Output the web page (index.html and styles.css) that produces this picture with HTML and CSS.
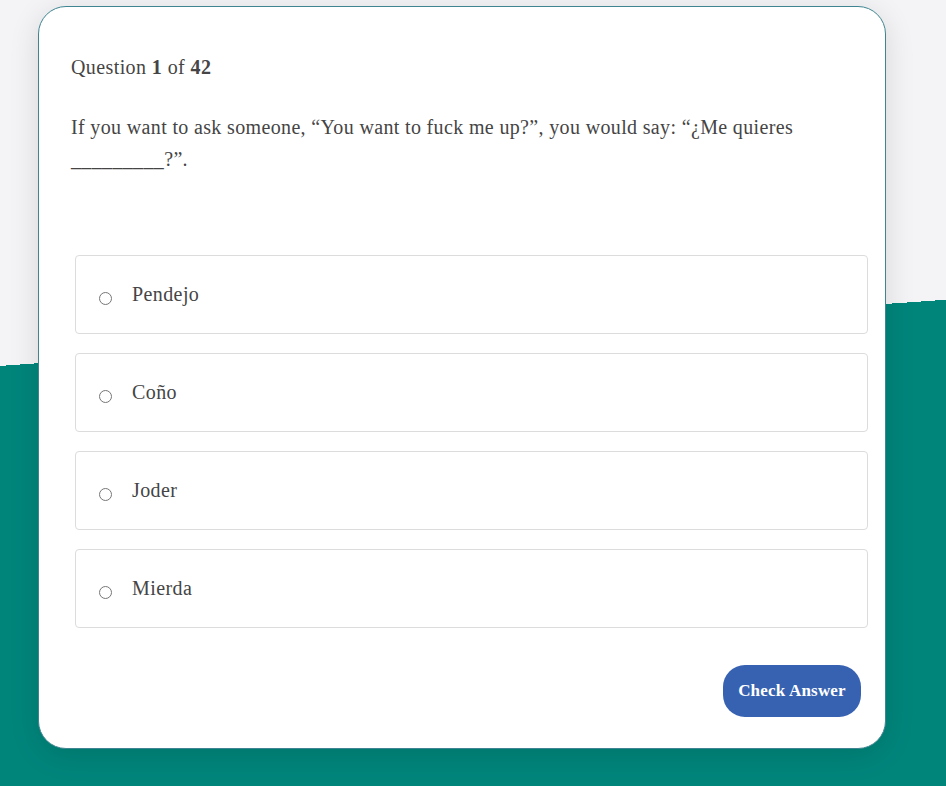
FILE: index.html
```html
<!DOCTYPE html>
<html lang="en">
<head>
    <meta charset="UTF-8">
    <meta name="viewport" content="width=device-width, initial-scale=1.0">
    <title>Spanish Swear Words Quiz</title>
    <link rel="stylesheet" href="styles.css">
</head>
<body>
    <div class="page">
        <div class="quiz-card">
            <p class="quiz-count">Question <b>1</b> of <b>42</b></p>
            <p class="quiz-question">If you want to ask someone, &ldquo;You want to fuck me up?&rdquo;, you would say: &ldquo;&iquest;Me quieres _________?&rdquo;.</p>

            <form class="quiz-options">
                <label class="option">
                    <input type="radio" name="answer" value="Pendejo">
                    <span>Pendejo</span>
                </label>
                <label class="option">
                    <input type="radio" name="answer" value="Coño">
                    <span>Coño</span>
                </label>
                <label class="option">
                    <input type="radio" name="answer" value="Joder">
                    <span>Joder</span>
                </label>
                <label class="option">
                    <input type="radio" name="answer" value="Mierda">
                    <span>Mierda</span>
                </label>
            </form>

            <div class="quiz-footer">
                <button type="button" class="check-btn">Check Answer</button>
            </div>
        </div>
    </div>
</body>
</html>
```

FILE: styles.css
```css
body {
    margin: 0;
    padding: 0;
    font-family: 'Liberation Serif', 'DejaVu Serif', serif;
    color: #454545;
}
.page {
    min-height: 100vh;
    box-sizing: border-box;
    padding: 6px 0 36px 38px;
    background: linear-gradient(176deg, #f4f4f6 365px, #00857b 365px);
}
.quiz-card {
    width: 848px;
    box-sizing: border-box;
    background: #fff;
    border: 1px solid #3f8591;
    border-radius: 28px;
    padding: 46px 24px 31px 32px;
    box-shadow: 0 6px 30px rgba(0, 0, 0, 0.12);
}
.quiz-count {
    margin: 0;
    font-size: 20px;
    letter-spacing: 0.4px;
    line-height: 28px;
}
.quiz-count b {
    font-weight: bold;
}
.quiz-question {
    margin: 30px 0 0;
    font-size: 20px;
    letter-spacing: 0.35px;
    line-height: 32px;
    padding-right: 40px;
}
.quiz-options {
    display: flex;
    flex-direction: column;
    gap: 19px;
    margin: 80px -7px 0 4px;
}
.option {
    display: flex;
    align-items: center;
    gap: 20px;
    height: 79px;
    box-sizing: border-box;
    padding: 0 23px;
    border: 1px solid #dcdcdc;
    border-radius: 4px;
    font-size: 20px;
    letter-spacing: 0.4px;
    cursor: pointer;
}
.option input {
    margin: 8px 0 0;
    width: 13px;
    height: 13px;
}
.quiz-footer {
    display: flex;
    justify-content: flex-end;
    margin-top: 37px;
}
.check-btn {
    width: 138px;
    height: 52px;
    border: none;
    border-radius: 22px;
    background-color: #3762b1;
    color: #fff;
    font-family: 'Liberation Serif', serif;
    font-weight: bold;
    font-size: 17px;
    letter-spacing: 0.2px;
    cursor: pointer;
}
```
